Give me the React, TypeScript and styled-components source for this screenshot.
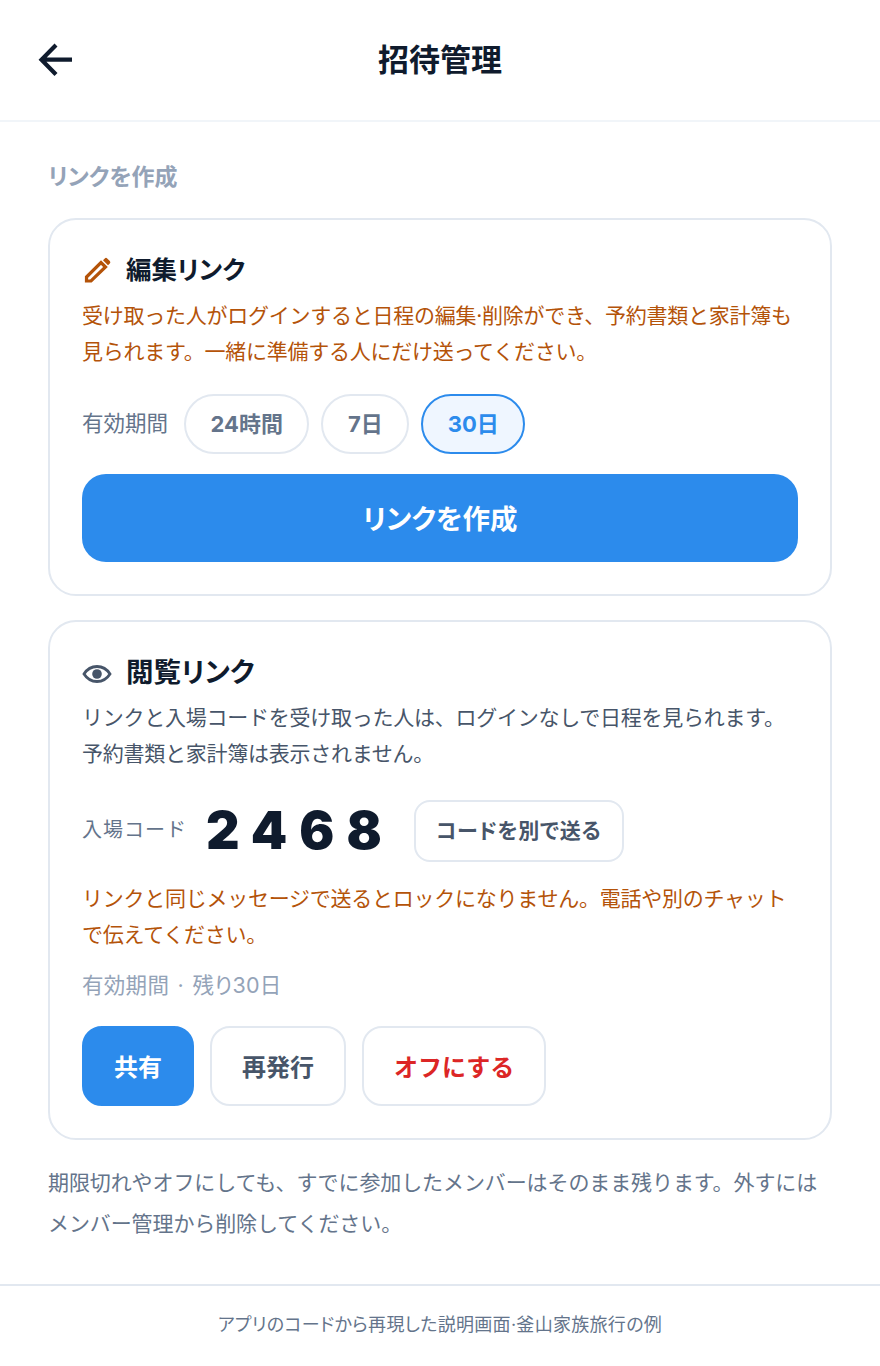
import React from "react";
import styled, { createGlobalStyle } from "styled-components";

const Global = createGlobalStyle`
  html, body { margin: 0; padding: 0; background: #fff; }
  body { font-family: Inter, "Noto Sans CJK JP", sans-serif; color: #0f1b2d; }
  * { box-sizing: border-box; }
`;

const Page = styled.div`
  width: 880px;
  height: 1366px;
  display: flex;
  flex-direction: column;
  background: #fff;
`;
const Header = styled.header`
  height: 122px;
  flex: none;
  border-bottom: 2px solid #f1f5f9;
  display: flex;
  align-items: center;
  justify-content: center;
  position: relative;
`;
const BackIcon = styled.svg`
  position: absolute;
  left: 36px;
  top: 40px;
  width: 40px;
  height: 40px;
`;
const Title = styled.h1`
  margin: 0;
  font-size: 31px;
  line-height: 40px;
  font-weight: 700;
  color: #0f1b2d;
`;
const Main = styled.main`
  flex: 1;
  padding: 40px 48px 0;
  display: flex;
  flex-direction: column;
`;
const SectionLabel = styled.div`
  font-size: 23px;
  line-height: 30px;
  font-weight: 700;
  font-feature-settings: "palt";
  color: #94a3b8;
  margin-bottom: 26px;
`;
const Card = styled.section<{ $mb?: number }>`
  border: 2px solid #e2e8f0;
  border-radius: 28px;
  padding: 30px 32px 32px;
  margin-bottom: ${(p) => p.$mb ?? 24}px;
`;
const CardHead = styled.div`
  display: flex;
  align-items: center;
  gap: 14px;
  height: 40px;
`;
const HeadIcon = styled.svg`
  width: 30px;
  height: 30px;
  flex: none;
`;
const CardTitle = styled.h2<{ $size: number }>`
  margin: 0;
  font-size: ${(p) => p.$size}px;
  line-height: 40px;
  font-weight: 700;
  font-feature-settings: "palt";
  color: #0f1b2d;
`;
const Desc = styled.p<{ $tone: string; $mt?: number }>`
  margin: ${(p) => p.$mt ?? 8}px 0 0;
  font-size: 21px;
  letter-spacing: -0.25px;
  line-height: 36px;
  color: ${(p) => p.$tone};
`;
const PeriodRow = styled.div`
  display: flex;
  align-items: center;
  gap: 12px;
  margin-top: 24px;
`;
const RowLabel = styled.span`
  font-size: 21.5px;
  line-height: 36px;
  padding-bottom: 3px;
  color: #64748b;
  margin-right: 4px;
`;
const Pill = styled.button<{ $active?: boolean }>`
  height: 60px;
  padding: 0 24.5px 5px;
  border-radius: 30px;
  border: 2px solid ${(p) => (p.$active ? "#2c8bec" : "#e2e8f0")};
  background: ${(p) => (p.$active ? "#eff6ff" : "#fff")};
  color: ${(p) => (p.$active ? "#2c8bec" : "#64748b")};
  font: 700 22px Inter, "Noto Sans CJK JP", sans-serif;
`;
const Primary = styled.button`
  display: block;
  width: 100%;
  height: 88px;
  margin-top: 20px;
  padding: 0 0 2px;
  border: 0;
  border-radius: 24px;
  background: #2c8bec;
  color: #fff;
  font: 700 27.5px Inter, "Noto Sans CJK JP", sans-serif;
  font-feature-settings: "palt";
`;
const CodeRow = styled.div`
  display: flex;
  align-items: center;
  margin-top: 28px;
`;
const CodeLabel = styled.span`
  font-size: 20px;
  letter-spacing: 1px;
  padding-bottom: 5px;
  color: #64748b;
  width: 124px;
`;
const Code = styled.span`
  font-size: 52px;
  line-height: 60px;
  font-weight: 900;
  letter-spacing: 12px;
  color: #0f1b2d;
  width: 208px;
`;
const SendBtn = styled.button`
  height: 62px;
  padding: 0 20px 4px;
  background: #fff;
  border: 2px solid #e2e8f0;
  border-radius: 16px;
  color: #475569;
  font: 700 21px Inter, "Noto Sans CJK JP", sans-serif;
  letter-spacing: 0.7px;
  font-feature-settings: "palt";
`;
const Meta = styled.div`
  margin-top: 14px;
  font-size: 21.5px;
  line-height: 36px;
  word-spacing: 2px;
  letter-spacing: 0.3px;
  font-feature-settings: "palt";
  color: #94a3b8;
`;
const Actions = styled.div`
  display: flex;
  gap: 16px;
  margin-top: 23px;
`;
const ActionBtn = styled.button<{ $kind: "primary" | "plain" | "danger" }>`
  height: 80px;
  padding: 0 30px 2px;
  border-radius: 20px;
  border: 2px solid ${(p) => (p.$kind === "primary" ? "#2c8bec" : "#e2e8f0")};
  background: ${(p) => (p.$kind === "primary" ? "#2c8bec" : "#fff")};
  color: ${(p) => (p.$kind === "primary" ? "#fff" : p.$kind === "danger" ? "#dc2626" : "#475569")};
  font: 700 24px Inter, "Noto Sans CJK JP", sans-serif;
`;
const Note = styled.p`
  margin: 0;
  font-size: 21px;
  letter-spacing: -0.1px;
  line-height: 41px;
  color: #64748b;
`;
const Footer = styled.footer`
  height: 82px;
  flex: none;
  border-top: 2px solid #e2e8f0;
  padding-bottom: 6px;
  display: flex;
  align-items: center;
  justify-content: center;
  font-size: 18px;
  letter-spacing: 0.3px;
  font-feature-settings: "palt";
  color: #64748b;
`;

export default function App() {
  return (
    <Page>
      <Global />
      <Header>
        <BackIcon viewBox="0 0 40 40" fill="none" stroke="#0f1b2d" strokeWidth="4.2">
          <path d="M36 19.7H7M20 5L5.5 19.7L20 34.5" />
        </BackIcon>
        <Title>招待管理</Title>
      </Header>
      <Main>
        <SectionLabel>リンクを作成</SectionLabel>
        <Card>
          <CardHead>
            <HeadIcon viewBox="0 0 30 30">
              <path d="M4.5 26v-4L19 7.5l4.5 4.5L9 26z" fill="none" stroke="#b45309" strokeWidth="3.2" />
              <path d="M21 5.2l1.8-1.8q1.2-1.2 2.4 0l2.6 2.6q1.2 1.2 0 2.4l-1.8 1.8z" fill="#b45309" />
            </HeadIcon>
            <CardTitle $size={25.5}>編集リンク</CardTitle>
          </CardHead>
          <Desc $tone="#b45309">受け取った人がログインすると日程の編集·削除ができ、予約書類と家計簿も見られます。一緒に準備する人にだけ送ってください。</Desc>
          <PeriodRow>
            <RowLabel>有効期間</RowLabel>
            <Pill>24時間</Pill>
            <Pill>7日</Pill>
            <Pill $active>30日</Pill>
          </PeriodRow>
          <Primary>リンクを作成</Primary>
        </Card>
        <Card $mb={22}>
          <CardHead>
            <HeadIcon viewBox="0 0 30 30">
              <path d="M2 17C5.5 11.5 10 9.5 15 9.5S24.5 11.5 28 17C24.5 22.5 20 24.5 15 24.5S5.5 22.5 2 17z" fill="none" stroke="#475569" strokeWidth="2.8" />
              <circle cx="15" cy="17" r="4.8" fill="#475569" />
            </HeadIcon>
            <CardTitle $size={27.5}>閲覧リンク</CardTitle>
          </CardHead>
          <Desc $tone="#475569">リンクと入場コードを受け取った人は、ログインなしで日程を見られます。予約書類と家計簿は表示されません。</Desc>
          <CodeRow>
            <CodeLabel>入場コード</CodeLabel>
            <Code>2468</Code>
            <SendBtn>コードを別で送る</SendBtn>
          </CodeRow>
          <Desc $tone="#b45309" $mt={19}>リンクと同じメッセージで送るとロックになりません。電話や別のチャットで伝えてください。</Desc>
          <Meta>有効期間 · 残り30日</Meta>
          <Actions>
            <ActionBtn $kind="primary">共有</ActionBtn>
            <ActionBtn $kind="plain">再発行</ActionBtn>
            <ActionBtn $kind="danger">オフにする</ActionBtn>
          </Actions>
        </Card>
        <Note>期限切れやオフにしても、すでに参加したメンバーはそのまま残ります。外すにはメンバー管理から削除してください。</Note>
      </Main>
      <Footer>アプリのコードから再現した説明画面·釜山家族旅行の例</Footer>
    </Page>
  );
}
